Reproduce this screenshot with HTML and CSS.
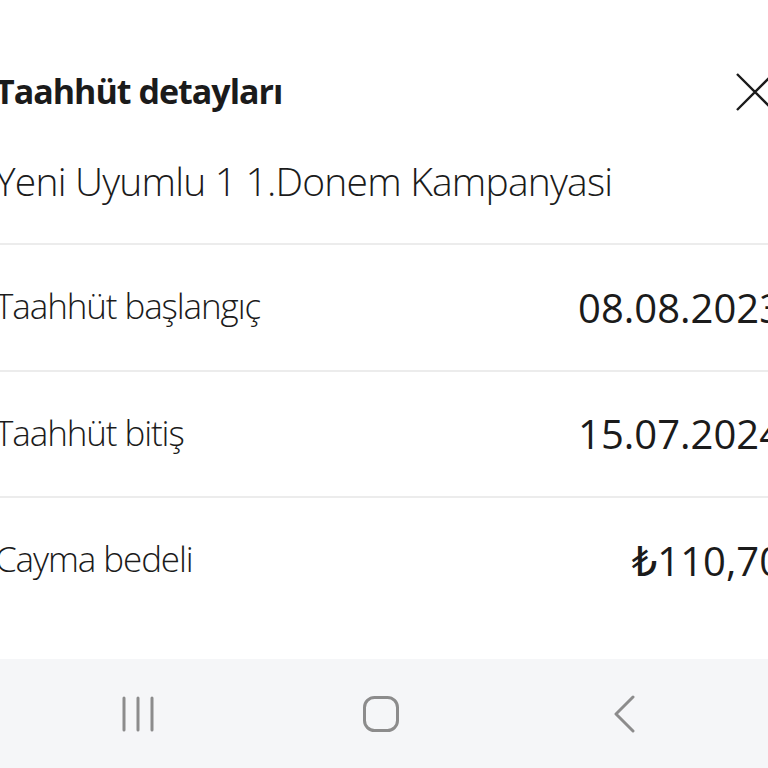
FILE: index.html
```html
<!DOCTYPE html>
<html lang="tr">
<head>
  <meta charset="UTF-8" />
  <meta name="viewport" content="width=device-width, initial-scale=1.0"/>
  <title>Taahhüt detayları</title>
  <link rel="stylesheet" href="styles.css">
</head>
<body>
  <div class="screen">
    <div class="sheet">
      <div class="sheet-head">
        <h1>Taahhüt detayları</h1>
        <button class="close" aria-label="Kapat">
          <svg width="38" height="38" viewBox="0 0 38 38">
            <path d="M1 1 L37 37 M37 1 L1 37" stroke="#1b1b1b" stroke-width="2.4" fill="none"/>
          </svg>
        </button>
      </div>
      <p class="campaign">Yeni Uyumlu 1 1.Donem Kampanyasi</p>

      <ul class="details">
        <li class="row">
          <span class="label">Taahhüt başlangıç</span>
          <span class="value">08.08.2023</span>
        </li>
        <li class="row">
          <span class="label">Taahhüt bitiş</span>
          <span class="value">15.07.2024</span>
        </li>
        <li class="row">
          <span class="label">Cayma bedeli</span>
          <span class="value">₺110,70</span>
        </li>
      </ul>
    </div>

    <nav class="navbar">
      <div class="nav-btn">
        <svg width="34" height="36" viewBox="0 0 34 36">
          <path d="M3 2 V34 M17 2 V34 M31 2 V34" stroke="#8c8c8c" stroke-width="3" stroke-linecap="round"/>
        </svg>
      </div>
      <div class="nav-btn">
        <svg width="36" height="36" viewBox="0 0 36 36">
          <rect x="1.5" y="1.5" width="33" height="33" rx="10" stroke="#8c8c8c" stroke-width="3" fill="none"/>
        </svg>
      </div>
      <div class="nav-btn">
        <svg width="22" height="38" viewBox="0 0 22 38">
          <path d="M20 2 L3 19 L20 36" stroke="#8c8c8c" stroke-width="3" stroke-linecap="round" stroke-linejoin="round" fill="none"/>
        </svg>
      </div>
    </nav>
  </div>
</body>
</html>
```

FILE: styles.css
```css
* {
  box-sizing: border-box;
}

body {
  margin: 0;
  padding: 0;
  background: #ffffff;
  font-family: 'Open Sans', 'DejaVu Sans', sans-serif;
  color: #1b1b1b;
}

.screen {
  width: 768px;
  height: 768px;
  overflow: hidden;
  display: flex;
  flex-direction: column;
}

.sheet {
  flex: 1;
  width: 787px;
  margin-left: -5px;
}

.sheet-head {
  display: flex;
  justify-content: space-between;
  align-items: center;
  margin-top: 73px;
  height: 37px;
}

.sheet-head h1 {
  margin: 0;
  font-size: 34px;
  line-height: 37px;
  font-weight: 700;
  letter-spacing: -1px;
}

.close {
  background: none;
  border: none;
  padding: 0;
  margin-right: 8px;
  width: 38px;
  height: 38px;
}

.campaign {
  margin: 49px 0 0;
  padding-bottom: 41px;
  font-size: 39px;
  line-height: 43px;
  font-weight: 300;
  letter-spacing: -0.8px;
}

.details {
  list-style: none;
  margin: 0;
  padding: 0;
}

.row {
  display: flex;
  justify-content: space-between;
  align-items: center;
  height: 126.5px;
  border-top: 2px solid #ececec;
}

.label {
  font-size: 35px;
  font-weight: 300;
  letter-spacing: -1.1px;
  padding-bottom: 3px;
}

.value {
  font-size: 40px;
  font-weight: 400;
}

.navbar {
  height: 109px;
  flex-shrink: 0;
  background: #f5f6f8;
  display: grid;
  grid-template-columns: repeat(3, 243px);
  justify-content: center;
  align-items: center;
  padding-right: 6px;
}

.nav-btn {
  display: flex;
  justify-content: center;
  align-items: center;
}
```
